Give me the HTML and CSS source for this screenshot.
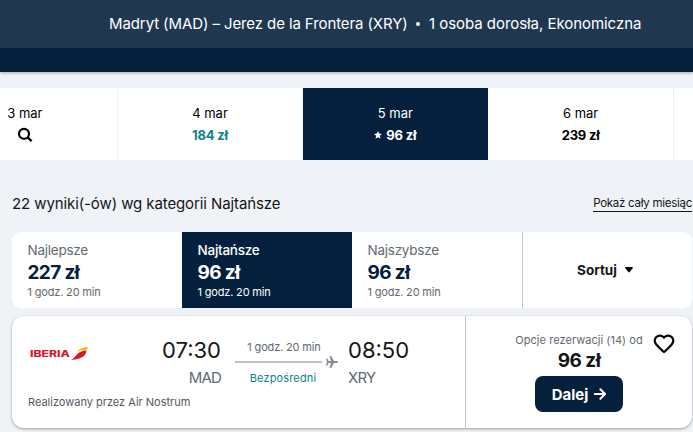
FILE: index.html
```html
<!DOCTYPE html>
<html lang="pl">
<head>
  <meta charset="UTF-8">
  <title>Madryt (MAD) – Jerez de la Frontera (XRY)</title>
  <link rel="stylesheet" href="styles.css">
</head>
<body>
<header class="search-header">
  <div class="search-summary">
    <span class="route">Madryt (MAD) – Jerez de la Frontera (XRY)</span>
    <span class="dot"></span>
    <span class="travellers">1 osoba dorosła, Ekonomiczna</span>
  </div>
</header>

<!-- Calendar strip -->
<nav class="date-strip">
  <div class="date-cell first">
    <span class="date">3 mar</span>
    <svg class="search-icon" width="16" height="16" viewBox="0 0 16 16">
      <circle cx="7" cy="6.8" r="5" fill="none" stroke="#000" stroke-width="2.2"/>
      <path d="M10.6 10.4 L14.6 14.2" stroke="#000" stroke-width="2.4"/>
    </svg>
  </div>
  <div class="date-cell">
    <span class="date">4 mar</span>
    <span class="date-price cheap">184 zł</span>
  </div>
  <div class="date-cell selected">
    <span class="date">5 mar</span>
    <span class="date-price">
      <svg class="star-icon" width="8" height="8" viewBox="0 0 8 8">
        <path d="M4 0 L5.1 2.6 L8 2.9 L5.8 4.8 L6.5 7.8 L4 6.2 L1.5 7.8 L2.2 4.8 L0 2.9 L2.9 2.6 Z" fill="#fff"/>
      </svg>
      <span>96 zł</span>
    </span>
  </div>
  <div class="date-cell">
    <span class="date">6 mar</span>
    <span class="date-price">239 zł</span>
  </div>
  <div class="date-cell last"></div>
</nav>

<main class="results">
  <div class="results-head">
    <h1>22 wyniki(-ów) wg kategorii Najtańsze</h1>
    <a class="month-link">Pokaż cały miesiąc</a>
  </div>

  <!-- Sorting tabs -->
  <div class="tabs">
    <div class="tab">
      <span class="tab-name">Najlepsze</span>
      <span class="tab-price">227 zł</span>
      <span class="tab-time">1 godz. 20 min</span>
    </div>
    <div class="tab active">
      <span class="tab-name">Najtańsze</span>
      <span class="tab-price">96 zł</span>
      <span class="tab-time">1 godz. 20 min</span>
    </div>
    <div class="tab">
      <span class="tab-name">Najszybsze</span>
      <span class="tab-price">96 zł</span>
      <span class="tab-time">1 godz. 20 min</span>
    </div>
    <div class="sort">
      <span>Sortuj</span>
      <svg width="8" height="6" viewBox="0 0 8 6">
        <path d="M0.8 0 H7.2 Q8.4 0.2 7.6 1.3 L4.7 5 Q4 5.8 3.3 5 L0.4 1.3 Q-0.4 0.2 0.8 0 Z" fill="#000"/>
      </svg>
    </div>
  </div>

  <!-- Flight ticket -->
  <article class="ticket">
    <div class="ticket-main">
      <div class="leg">
        <svg class="airline-logo" width="60" height="16" viewBox="0 0 60 16">
          <text class="logo-text" x="0" y="11" textLength="40" lengthAdjust="spacingAndGlyphs">IBERIA</text>
          <path d="M41 14 C46 11.5 46 5.5 56 4.2 C57.5 7.5 53 13.5 41 14 Z" fill="#d7192d"/>
          <path d="M47 6.2 C49 2.6 53 1.2 58 1.2 C57.5 3 57 3.6 55.6 4 C52 4 49 4.8 47 6.2 Z" fill="#fab600"/>
        </svg>
        <div class="stop depart">
          <span class="time">07:30</span>
          <span class="airport">MAD</span>
        </div>
        <div class="path">
          <span class="duration">1 godz. 20 min</span>
          <div class="line-row">
            <span class="line"></span>
            <svg width="12" height="12" viewBox="0 0 12 12">
              <path d="M0 2.6 H1.3 L2.6 5 H5 L3.6 0 H5.2 L8 5 H10.8 Q12 5.2 12 6 Q12 6.8 10.8 7 H8 L5.2 12 H3.6 L5 7 H2.6 L1.3 9.4 H0 L0.9 6 Z" fill="#8f8795"/>
            </svg>
          </div>
          <span class="direct">Bezpośredni</span>
        </div>
        <div class="stop arrive">
          <span class="time">08:50</span>
          <span class="airport">XRY</span>
        </div>
      </div>
      <p class="operator">Realizowany przez Air Nostrum</p>
    </div>
    <div class="ticket-price">
      <span class="options">Opcje rezerwacji (14) od</span>
      <span class="price">96 zł</span>
      <button class="next-button" type="button">
        <span>Dalej</span>
        <svg width="12" height="12" viewBox="0 0 12 12">
          <path d="M0.8 6 H10.6 M6.4 1.2 L11 6 L6.4 10.8" fill="none" stroke="#fff" stroke-width="2" stroke-linecap="round" stroke-linejoin="round"/>
        </svg>
      </button>
      <svg class="heart-icon" width="22" height="20" viewBox="0 0 22 20">
        <path d="M11 3.6 C9 1 5.4 0.9 3.3 3 C1.2 5.2 1.5 8.3 3.3 10.5 C5.4 13 8 15.3 9.9 17.2 Q11 18.3 12.1 17.2 C14 15.3 16.6 13 18.7 10.5 C20.5 8.3 20.8 5.2 18.7 3 C16.6 0.9 13 1 11 3.6 Z" fill="none" stroke="#05060a" stroke-width="2.2" stroke-linejoin="round"/>
      </svg>
    </div>
  </article>
</main>
</body>
</html>
```

FILE: styles.css
```css
* {
  box-sizing: border-box;
}

body {
  font-family: Inter, "Open Sans", sans-serif;
  background-color: #eff2f7;
  color: #161616;
  margin: 0;
  height: 432px;
  overflow: hidden;
}

.search-header {
  height: 72px;
  background-color: #05203c;
  box-shadow: 0 1px 3px rgba(37, 32, 31, 0.35);
}

.search-summary {
  display: flex;
  align-items: center;
  height: 48px;
  padding: 0 0 2px 109px;
  background-color: #1f3850;
  color: #ffffff;
  font-size: 15px;
  letter-spacing: -0.1px;
  white-space: nowrap;
}

.route {
  width: 298px;
}

.dot {
  width: 4px;
  height: 4px;
  margin: 2px 9px 0;
  border-radius: 50%;
  background-color: #ffffff;
}

.travellers {
  letter-spacing: -0.05px;
}

.date-strip {
  display: flex;
  height: 72px;
  margin-top: 16px;
}

.date-cell {
  display: flex;
  flex: none;
  flex-direction: column;
  align-items: center;
  width: 185.33px;
  padding-top: 14px;
  border-right: 1px solid #eff1f2;
  background-color: #ffffff;
  color: #000000;
  font-size: 13px;
  line-height: 22px;
}

/* the outer days are cut off by the window edges */
.date-cell.first {
  width: 117.8px;
  padding-right: 67px;
}

.date-cell.last {
  flex: 1;
  width: auto;
  border-right: 0;
}

.date-cell.selected {
  background-color: #05203c;
  border-color: #05203c;
  color: #ffffff;
}

.search-icon {
  margin-top: 3px;
}

.date-price {
  display: flex;
  align-items: center;
  gap: 4px;
  font-size: 13px;
  font-weight: 700;
  letter-spacing: -0.2px;
}

.cheap {
  color: #0c838a;
}

.results {
  width: 680px;
  margin-left: 12px;
}

.results-head {
  display: flex;
  justify-content: space-between;
  align-items: flex-start;
  height: 72px;
  padding-top: 32px;
}

h1 {
  margin: 0;
  font-size: 15px;
  font-weight: 400;
  letter-spacing: -0.1px;
  line-height: 24px;
}

.month-link {
  margin-top: 4px;
  border-bottom: 1px solid #161616;
  font-size: 11.5px;
  letter-spacing: -0.27px;
  line-height: 15px;
}

.tabs {
  display: flex;
  height: 76px;
  border-radius: 9px;
  background-color: #ffffff;
  overflow: hidden;
}

.tab {
  display: flex;
  flex-direction: column;
  width: 170px;
  padding: 8px 0 0 15.5px;
  color: #626971;
}

.tab-name {
  font-size: 13.5px;
  letter-spacing: -0.25px;
  line-height: 20px;
}

.tab-price {
  height: 24px;
  color: #05203c;
  font-size: 19px;
  font-weight: 700;
  letter-spacing: -0.65px;
  line-height: 26px;
}

.tab-time {
  font-size: 11px;
  letter-spacing: -0.17px;
  line-height: 16px;
}

.tab.active {
  background-color: #05203c;
}

.tab.active span {
  color: #ffffff;
}

.tab.active .tab-name {
  font-weight: 500;
}

.sort {
  display: flex;
  flex: 1;
  align-items: center;
  justify-content: center;
  gap: 8px;
  padding-right: 5px;
  border-left: 1px solid #c1c7cf;
  font-size: 13.5px;
  font-weight: 700;
}

.ticket {
  display: flex;
  height: 112px;
  margin-top: 8px;
  border-radius: 12px;
  background-color: #ffffff;
  box-shadow: 0 1px 3px rgba(37, 32, 31, 0.4);
}

.ticket-main {
  width: 453px;
  padding: 20px 0 0 16px;
}

.leg {
  display: flex;
  height: 58px;
}

.airline-logo {
  margin: 10px 0 0 2px;
}

.logo-text {
  font-size: 9px;
  font-weight: 800;
  fill: #d7192d;
}

.stop {
  display: flex;
  flex-direction: column;
  width: 64px;
}

.depart {
  align-items: flex-end;
  margin-left: 67px;
}

.time {
  font-size: 22px;
  line-height: 28px;
}

.airport {
  color: #626971;
  font-size: 15px;
  letter-spacing: -0.8px;
  line-height: 28px;
}

.path {
  display: flex;
  flex-direction: column;
  align-items: center;
  width: 98px;
  margin: 3px 15px 0 14px;
  font-size: 11px;
  line-height: 16px;
}

.duration {
  color: #626971;
  letter-spacing: -0.15px;
}

.line-row {
  display: flex;
  align-items: center;
  align-self: stretch;
  gap: 4px;
  width: 103px;
  height: 13px;
}

.line {
  width: 87px;
  height: 2px;
  background-color: #bfc0cb;
}

.direct {
  color: #0c838a;
  letter-spacing: 0.15px;
  margin: 2px 2px 0 0;
}

.operator {
  margin: 0;
  color: #545860;
  font-size: 11px;
  line-height: 16px;
}

.ticket-price {
  position: relative;
  display: flex;
  flex: 1;
  flex-direction: column;
  align-items: center;
  padding: 16px 0 0;
  border-left: 1px solid #c1c7cf;
}

.options {
  color: #626971;
  font-size: 11px;
  letter-spacing: 0.05px;
  line-height: 16px;
}

.price {
  height: 24px;
  font-size: 19px;
  font-weight: 700;
  letter-spacing: -0.5px;
  line-height: 26px;
}

.next-button {
  display: flex;
  align-items: center;
  justify-content: center;
  gap: 6px;
  width: 88px;
  height: 36px;
  margin-top: 4px;
  border: 0;
  border-radius: 8px;
  background-color: #05203c;
  color: #ffffff;
  font-family: inherit;
  font-size: 15px;
  font-weight: 700;
}

/* save button sits in the corner of the price panel */
.heart-icon {
  position: absolute;
  top: 18px;
  right: 17px;
}
```
